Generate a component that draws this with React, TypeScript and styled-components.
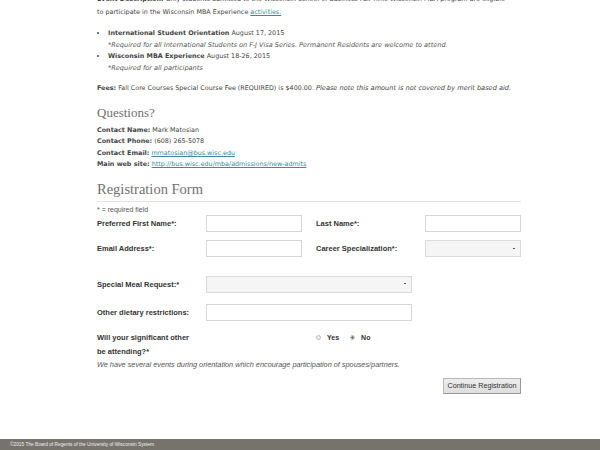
import React from "react";
import styled, { createGlobalStyle } from "styled-components";

const Global = createGlobalStyle`
  html, body { margin: 0; padding: 0; background: #fff; }
  body { width: 600px; height: 450px; overflow: hidden; }
`;

const Page = styled.div`
  position: relative;
  width: 600px;
  height: 450px;
  display: flex;
  flex-direction: column;
  overflow: hidden;
`;

const Main = styled.main`
  flex: 1;
  margin-top: -7px;
  padding-left: 97px;
  width: 424px;
  font-family: "DejaVu Sans", Verdana, sans-serif;
  font-size: 6.4px;
  line-height: 11.5px;
  color: #444;
`;

const P = styled.p`
  margin: 0;
`;

const Lead = styled(P)`
  line-height: 13.5px;
`;

const Link = styled.a`
  color: #3d8a9c;
  text-decoration: underline;
`;

const List = styled.ul`
  margin: 10px 0 0;
  padding-left: 11px;
  list-style: disc;
  li { margin: 0; }
`;

const Note = styled.div`
  font-style: italic;
  font-size: 6.55px;
  color: #555;
`;

const Fees = styled(P)`
  margin-top: 9px;
  i { font-size: 6.6px; }
`;

const Heading = styled.h2<{ $size: number }>`
  margin: 0;
  font-family: "Liberation Serif", Georgia, serif;
  font-weight: normal;
  color: #707070;
  font-size: ${(p) => p.$size}px;
`;

const QHeading = styled(Heading)`
  margin-top: 8px;
  line-height: 20px;
`;

const Contacts = styled.div`
  margin-top: 2px;
  line-height: 11.6px;
`;

const FormHeading = styled(Heading)`
  margin-top: 8px;
  line-height: 20px;
  padding-bottom: 2px;
  border-bottom: 1px solid #e3e3e3;
`;

const Form = styled.form`
  font-family: "Liberation Sans", Arial, sans-serif;
  color: #333;
`;

const Required = styled.div`
  font-size: 7px;
  line-height: 10px;
  margin-top: 3px;
  color: #555;
`;

const Row = styled.div<{ $mt?: number }>`
  display: grid;
  grid-template-columns: 109px 110px 109px 96px;
  align-items: center;
  height: 18px;
  margin-top: ${(p) => p.$mt ?? 7}px;
`;

const WideRow = styled.div<{ $mt?: number }>`
  display: grid;
  grid-template-columns: 109px 206px;
  align-items: center;
  height: 17px;
  margin-top: ${(p) => p.$mt ?? 11}px;
`;

const Label = styled.label`
  font-weight: bold;
  font-size: 7.5px;
  color: #333;
`;

const Input = styled.input`
  box-sizing: border-box;
  width: 96px;
  height: 17px;
  border: 1px solid #d6d6d6;
  background: #fff;
  margin: 0;
  padding: 0 3px;
  font-size: 7px;
`;

const WideInput = styled(Input)`
  width: 206px;
`;

const FakeSelect = styled.div<{ $w: number }>`
  box-sizing: border-box;
  width: ${(p) => p.$w}px;
  height: 17px;
  border: 1px solid #dadada;
  background: #f5f5f5;
  display: flex;
  align-items: center;
  justify-content: flex-end;
  padding-right: 5px;
`;

const Caret = styled.span`
  display: block;
  width: 2px;
  height: 1px;
  border-top: 1.5px solid #555;
`;

const Question = styled.div`
  margin-top: 10px;
  display: grid;
  grid-template-columns: 219px 1fr;
  font-size: 7.5px;
  line-height: 14px;
`;

const QLabel = styled.div`
  font-weight: bold;
  color: #333;
`;

const Radios = styled.div`
  display: flex;
  align-items: center;
  gap: 11px;
  height: 14px;
`;

const RadioItem = styled.span`
  display: flex;
  align-items: center;
  gap: 6px;
  font-weight: bold;
  font-size: 7px;
`;

const Dot = styled.span<{ $on?: boolean }>`
  box-sizing: border-box;
  width: 5px;
  height: 5px;
  border-radius: 50%;
  border: 1px solid #bbb;
  background: ${(p) => (p.$on ? "radial-gradient(circle, #777 0 1px, #eee 1.2px)" : "#eee")};
`;

const Hint = styled.div`
  font-style: italic;
  font-size: 7.3px;
  line-height: 11px;
  color: #555;
`;

const Actions = styled.div`
  display: flex;
  justify-content: flex-end;
  margin-top: 8px;
`;

const Button = styled.button`
  box-sizing: border-box;
  height: 16px;
  width: 78px;
  padding: 0;
  font-family: "Liberation Sans", Arial, sans-serif;
  font-size: 7.2px;
  color: #333;
  background: linear-gradient(#ededed, #dedede);
  border: 1px solid #b9b9b9;
  border-right-color: #999;
  border-bottom-color: #999;
`;

const Footer = styled.footer`
  height: 11px;
  background: #76736d;
  color: #f0f0f0;
  font-family: "Liberation Sans", Arial, sans-serif;
  font-size: 4.8px;
  line-height: 11px;
  padding-left: 10px;
`;

export default function App() {
  return (
    <Page>
      <Global />
      <Main>
        <Lead>
          <b>Event Description:</b> Only students admitted to the Wisconsin School of Business Full-Time Wisconsin MBA program are eligible
        </Lead>
        <P>
          to participate in the Wisconsin MBA Experience <Link href="#">activities.</Link>
        </P>
        <List>
          <li>
            <b>International Student Orientation</b> August 17, 2015
            <Note>*Required for all International Students on F-J Visa Series. Permanent Residents are welcome to attend.</Note>
          </li>
          <li>
            <b>Wisconsin MBA Experience</b> August 18-26, 2015
            <Note>*Required for all participants</Note>
          </li>
        </List>
        <Fees>
          <b>Fees:</b> Fall Core Courses Special Course Fee (REQUIRED) is $400.00.{" "}
          <i>Please note this amount is not covered by merit based aid.</i>
        </Fees>
        <QHeading $size={13}>Questions?</QHeading>
        <Contacts>
          <P><b>Contact Name:</b> Mark Matosian</P>
          <P><b>Contact Phone:</b> (608) 265-5078</P>
          <P><b>Contact Email:</b> <Link href="#">mmatosian@bus.wisc.edu</Link></P>
          <P><b>Main web site:</b> <Link href="#">http://bus.wisc.edu/mba/admissions/new-admits</Link></P>
        </Contacts>
        <FormHeading $size={14.5}>Registration Form</FormHeading>
        <Form>
          <Required>* = required field</Required>
          <Row $mt={0}>
            <Label>Preferred First Name*:</Label>
            <Input />
            <Label>Last Name*:</Label>
            <Input />
          </Row>
          <Row>
            <Label>Email Address*:</Label>
            <Input />
            <Label>Career Specialization*:</Label>
            <FakeSelect $w={96}><Caret /></FakeSelect>
          </Row>
          <WideRow $mt={18}>
            <Label>Special Meal Request:*</Label>
            <FakeSelect $w={206}><Caret /></FakeSelect>
          </WideRow>
          <WideRow>
            <Label>Other dietary restrictions:</Label>
            <WideInput />
          </WideRow>
          <Question>
            <QLabel>
              Will your significant other
              <br />
              be attending?*
            </QLabel>
            <Radios>
              <RadioItem><Dot />Yes</RadioItem>
              <RadioItem><Dot $on />No</RadioItem>
            </Radios>
          </Question>
          <Hint>We have several events during orientation which encourage participation of spouses/partners.</Hint>
          <Actions>
            <Button type="button">Continue Registration</Button>
          </Actions>
        </Form>
      </Main>
      <Footer>©2015 The Board of Regents of the University of Wisconsin System</Footer>
    </Page>
  );
}
